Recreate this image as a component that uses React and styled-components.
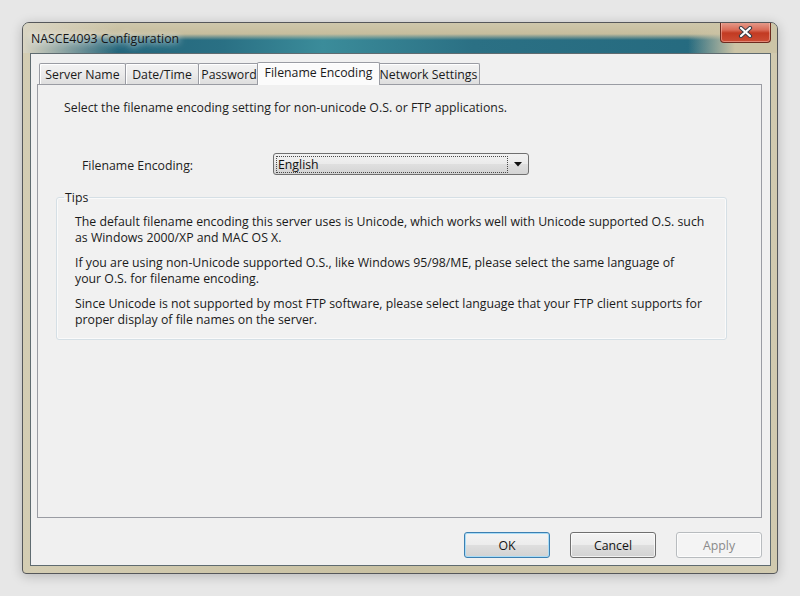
import React from 'react';
import styled, { createGlobalStyle } from 'styled-components';

const GlobalStyle = createGlobalStyle`
  html, body {
    margin: 0;
    padding: 0;
    background: #e7e7e7;
  }
  body {
    font-family: "Open Sans", "Noto Sans", sans-serif;
    font-size: 12.3px;
    color: #1e1e1e;
  }
`;

const Desktop = styled.div`
  width: 800px;
  height: 596px;
  box-sizing: border-box;
  padding: 22px;
  background: #e7e7e7;
`;

const Window = styled.div`
  width: 756px;
  height: 552px;
  box-sizing: border-box;
  display: flex;
  flex-direction: column;
  border: 1px solid #55575a;
  border-radius: 7px 7px 4px 4px;
  background: linear-gradient(to right, #d4cdb3, #c8c0a1 50%, #d1caaf);
  box-shadow: 0 2px 12px rgba(0, 0, 0, 0.22);
  overflow: hidden;
`;

const TitleBar = styled.div`
  height: 30px;
  flex: none;
  display: flex;
  align-items: flex-start;
  background:
    linear-gradient(to right, #dad5c3 0, rgba(218, 213, 195, 0.75) 25px, rgba(218, 213, 195, 0) 95px, rgba(205, 197, 166, 0) 665px, #ccc4a6 712px),
    linear-gradient(to bottom, #cec7ab 0, #c6bd9d 11px, rgba(198, 189, 157, 0) 17px),
    linear-gradient(to right, #1f5d74 0, #2a7084 200px, #3b8c9a 300px, #2b7084 450px, #256a7f 700px);
`;

const Title = styled.div`
  padding: 8px 0 0 8px;
  line-height: 16px;
  font-size: 12.3px;
  color: #151515;
  text-shadow: 0 0 6px rgba(255, 255, 255, 0.9), 0 0 10px rgba(255, 255, 255, 0.7);
`;

const CloseButton = styled.div`
  margin: -1px 6px 0 auto;
  width: 51px;
  height: 21px;
  box-sizing: border-box;
  display: flex;
  align-items: center;
  justify-content: center;
  border: 1px solid #6e2a1e;
  border-top: none;
  border-radius: 0 0 4px 4px;
  background: linear-gradient(to bottom, #e6a090 0%, #d96a56 40%, #c23a22 55%, #cc4d35 100%);
  box-shadow: inset 0 0 0 1px rgba(255, 210, 200, 0.45);
`;

const Client = styled.div`
  flex: 1;
  margin: 0 6px 7px 7px;
  box-sizing: border-box;
  display: flex;
  flex-direction: column;
  padding: 8px 8px 7px 6px;
  border: 1px solid #5f6b70;
  background: #f0f0f0;
`;

const TabRow = styled.div`
  height: 22px;
  display: flex;
  align-items: flex-end;
  padding-left: 2px;
  flex: none;
`;

const Tab = styled.div`
  box-sizing: border-box;
  width: ${p => (p.$active ? p.$width + 4 : p.$width)}px;
  height: ${p => (p.$active ? 23 : 21)}px;
  margin-left: ${p => (p.$active ? -3 : p.$first ? 0 : -1)}px;
  margin-right: ${p => (p.$active ? -2 : 0)}px;
  margin-bottom: ${p => (p.$active ? -1 : 0)}px;
  position: relative;
  z-index: ${p => (p.$active ? 2 : 1)};
  display: flex;
  align-items: center;
  justify-content: center;
  padding-bottom: ${p => (p.$active ? 3 : 0)}px;
  border: 1px solid #9a9ca3;
  border-bottom: none;
  border-radius: 2px 2px 0 0;
  background: ${p =>
    p.$active ? '#fbfbfb' : 'linear-gradient(to bottom, #f3f3f3 0%, #ebebeb 50%, #dedede 100%)'};
  box-shadow: inset 1px 1px 0 #ffffff;
  white-space: nowrap;
  color: #1a1a1a;
`;

const Panel = styled.div`
  flex: 1;
  box-sizing: border-box;
  border: 1px solid #9a9ca3;
  background: #f0f0f0;
  padding: 15px 0 0 18px;
  position: relative;
  z-index: 1;
`;

const Intro = styled.div`
  margin-left: 8px;
  line-height: 15px;
`;

const FieldRow = styled.div`
  display: flex;
  align-items: center;
  height: 22px;
  margin-top: 38px;
`;

const FieldLabel = styled.div`
  margin-left: 26px;
  width: 191px;
  padding-top: 3px;
`;

const Select = styled.div`
  width: 256px;
  height: 22px;
  box-sizing: border-box;
  display: flex;
  align-items: center;
  padding: 0 6px 0 2px;
  border: 1px solid #707070;
  border-radius: 3px;
  background: linear-gradient(to bottom, #f2f2f2 0%, #ebebeb 48%, #dfdfdf 52%, #d4d4d4 100%);
`;

const SelectValue = styled.div`
  width: 232px;
  height: 17px;
  box-sizing: border-box;
  border: 1px dotted #4a4a4a;
  line-height: 15px;
  padding-left: 1px;
  color: #101010;
`;

const Arrow = styled.svg`
  margin-left: auto;
  flex: none;
`;

const GroupBox = styled.fieldset`
  width: 671px;
  box-sizing: border-box;
  margin: 15px 0 0 0;
  padding: 9px 10px 12px 18px;
  border: 1px solid #d5dfe5;
  border-radius: 3px;
  box-shadow: inset 0 0 0 1px #fafafa;
  background: #f1f1f1;
`;

const Legend = styled.legend`
  margin-left: -11px;
  padding: 0 1px;
  line-height: 15px;
  color: #1a1a1a;
`;

const Tip = styled.p`
  margin: 0 0 10px 0;
  line-height: 15.5px;
  color: #1a1a1a;
  white-space: nowrap;

  &:last-child {
    margin-bottom: 0;
  }
`;

const Footer = styled.div`
  flex: none;
  display: flex;
  justify-content: flex-end;
  gap: 20px;
  margin-top: 14px;
`;

const Button = styled.div`
  width: 86px;
  height: 26px;
  box-sizing: border-box;
  display: flex;
  align-items: center;
  justify-content: center;
  border: 1px solid ${p => (p.$default ? '#3c7fb1' : p.$disabled ? '#b8bcbf' : '#707070')};
  border-radius: 3px;
  background: ${p =>
    p.$disabled
      ? '#f4f4f4'
      : 'linear-gradient(to bottom, #f4f4f4 0%, #ececec 48%, #dedede 52%, #d2d2d2 100%)'};
  box-shadow: ${p => (p.$default ? 'inset 0 0 0 1px #a9dcf6' : 'inset 0 0 0 1px rgba(255,255,255,0.7)')};
  color: ${p => (p.$disabled ? '#8a8a8a' : '#151515')};
`;

const tabs = [
  { label: 'Server Name', width: 87 },
  { label: 'Date/Time', width: 74 },
  { label: 'Password', width: 62 },
  { label: 'Filename Encoding', width: 119, active: true },
  { label: 'Network Settings', width: 103 },
];

const CloseIcon = () => (
  <svg width="15" height="12" viewBox="0 0 15 12">
    <path d="M3 2 L12 10 M12 2 L3 10" stroke="#3a3f4a" strokeWidth="4.2" strokeLinecap="round" />
    <path d="M3 2 L12 10 M12 2 L3 10" stroke="#ffffff" strokeWidth="2.2" strokeLinecap="round" />
  </svg>
);

export default function App() {
  return (
    <>
      <GlobalStyle />
      <Desktop>
        <Window>
          <TitleBar>
            <Title>NASCE4093 Configuration</Title>
            <CloseButton>
              <CloseIcon />
            </CloseButton>
          </TitleBar>
          <Client>
            <TabRow>
              {tabs.map((t, i) => (
                <Tab key={t.label} $width={t.width} $active={t.active} $first={i === 0}>
                  {t.label}
                </Tab>
              ))}
            </TabRow>
            <Panel>
              <Intro>Select the filename encoding setting for non-unicode O.S. or FTP applications.</Intro>
              <FieldRow>
                <FieldLabel>Filename Encoding:</FieldLabel>
                <Select>
                  <SelectValue>English</SelectValue>
                  <Arrow width="8" height="5" viewBox="0 0 8 5">
                    <path d="M0 0 H8 L4 4.5 Z" fill="#111" />
                  </Arrow>
                </Select>
              </FieldRow>
              <GroupBox>
                <Legend>Tips</Legend>
                <Tip>
                  The default filename encoding this server uses is Unicode, which works well with Unicode supported O.S. such
                  <br />
                  as Windows 2000/XP and MAC OS X.
                </Tip>
                <Tip>
                  If you are using non-Unicode supported O.S., like Windows 95/98/ME, please select the same language of
                  <br />
                  your O.S. for filename encoding.
                </Tip>
                <Tip>
                  Since Unicode is not supported by most FTP software, please select language that your FTP client supports for
                  <br />
                  proper display of file names on the server.
                </Tip>
              </GroupBox>
            </Panel>
            <Footer>
              <Button $default>OK</Button>
              <Button>Cancel</Button>
              <Button $disabled>Apply</Button>
            </Footer>
          </Client>
        </Window>
      </Desktop>
    </>
  );
}
